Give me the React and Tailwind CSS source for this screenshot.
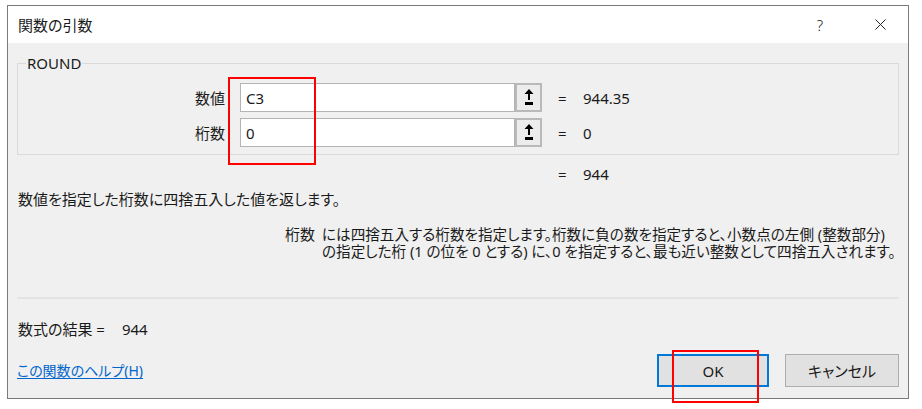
import React from 'react';

const font = "font-['Noto_Sans','Noto_Sans_CJK_JP',sans-serif] [font-feature-settings:'palt']";

const RefButton = () => (
  <div className="w-[27px] h-full border-2 border-[#b9b9b9] bg-[#ececec] flex items-center justify-center">
    <svg width="10" height="17" viewBox="0 0 10 17">
      <path d="M5 0 L9.5 5 L6 5 L6 11 L4 11 L4 5 L0.5 5 Z" fill="#000" />
      <rect x="1" y="13" width="8" height="3" fill="#000" />
    </svg>
  </div>
);

const ArgRow = ({ label, value, result }) => (
  <div className="flex items-center h-[29px]">
    <div className="w-[208px] text-right pr-[1px]">{label}</div>
    <div className="ml-[14px] flex h-full w-[302px]">
      <div className="flex-1 bg-white border border-[#b4b4b4] flex items-center pl-[5px]">{value}</div>
      <RefButton />
    </div>
    <div className="ml-[16px] w-[25px]">=</div>
    <div>{result}</div>
  </div>
);

const App = () => {
  return (
    <div className={`relative w-[922px] h-[409px] bg-white text-[15px] leading-[18px] text-[#1a1a1a] ${font}`}>
      {/* ダイアログ本体 */}
      <div className="absolute left-[7px] top-[5px] w-[902px] h-[394px] border border-[#7a7a7a] flex flex-col">
        {/* タイトルバー */}
        <div className="h-[37px] bg-white flex items-center pl-[10px] pr-[22px]">
          <div className="flex-1 text-[15px]">関数の引数</div>
          <div className="text-[15px] font-light mr-[52px]">?</div>
          <svg width="11" height="11" viewBox="0 0 11 11">
            <path d="M0.5 0.5 L10.5 10.5 M10.5 0.5 L0.5 10.5" stroke="#222" strokeWidth="1" />
          </svg>
        </div>

        {/* 内容 */}
        <div className="flex-1 bg-[#f0f0f0] px-[9px] flex flex-col">
          {/* ROUND グループ */}
          <div className="relative mt-[20px] h-[92px] border border-[#dadada] pt-[19px] flex flex-col gap-[6px]">
            <div className="absolute -top-[10px] left-[8px] px-[1px] bg-[#f0f0f0]">ROUND</div>
            <ArgRow label="数値" value="C3" result="944.35" />
            <ArgRow label="桁数" value="0" result="0" />
          </div>

          <div className="mt-[10px] ml-[541px] flex">
            <div className="w-[25px]">=</div>
            <div>944</div>
          </div>

          <div className="mt-[7px] ml-[1px]">数値を指定した桁数に四捨五入した値を返します。</div>

          <div className="mt-[18px] flex leading-[17px]">
            <div className="ml-[268px] w-[37px] shrink-0 whitespace-nowrap">桁数</div>
            <div className="whitespace-nowrap text-[14.6px]">
              <div>には四捨五入する桁数を指定します。桁数に負の数を指定すると、小数点の左側 (整数部分)</div>
              <div>の指定した桁 (1 の位を 0 とする) に、0 を指定すると、最も近い整数として四捨五入されます。</div>
            </div>
          </div>

          <div className="mt-[37px] h-[2px] bg-[#e3e3e3]" />

          <div className="mt-[21px] ml-[1px] flex">
            <div>数式の結果 =</div>
            <div className="ml-[17px]">944</div>
          </div>

          <div className="mt-[16px] flex items-center">
            <div className="flex-1">
              <a href="#" className="text-[14px] text-[#0066cc] underline underline-offset-2">この関数のヘルプ(H)</a>
            </div>
            <button className="w-[112px] h-[33px] border-2 border-[#0078d7] bg-[#e1e1e1]">OK</button>
            <button className="ml-[16px] w-[114px] h-[33px] border border-[#adadad] bg-[#e1e1e1]">キャンセル</button>
          </div>
        </div>
      </div>

      {/* 赤枠の注釈 */}
      <div className="absolute left-[228px] top-[77px] w-[88px] h-[88px] border-2 border-[#ff0000]" />
      <div className="absolute left-[672px] top-[350px] w-[87px] h-[53px] border-2 border-[#ff0000]" />
    </div>
  );
};

export default App;
